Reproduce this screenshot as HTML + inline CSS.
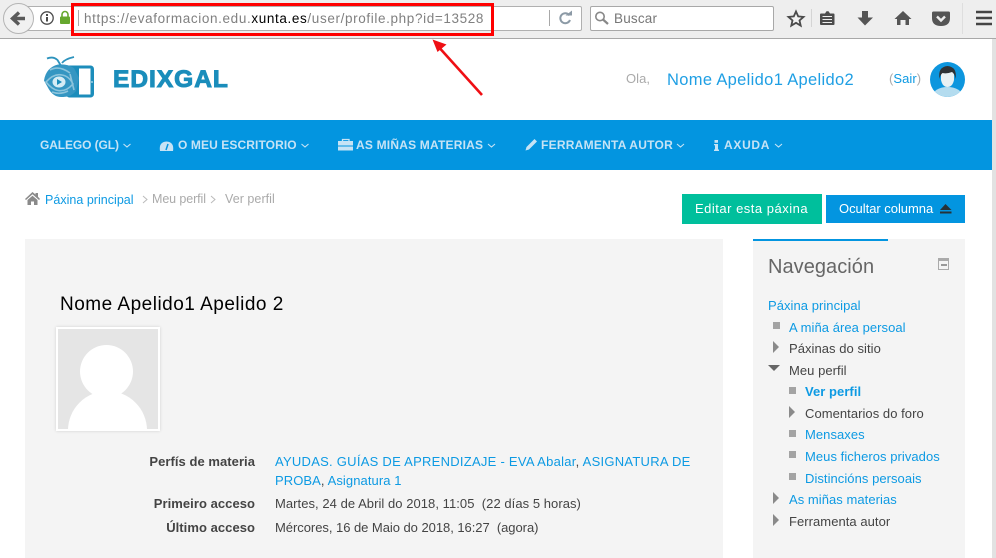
<!DOCTYPE html>
<html><head><meta charset="utf-8"><title>Perfil</title>
<style>
html,body{margin:0;padding:0;background:#fff}
body{width:996px;height:558px;overflow:hidden;position:relative;font-family:"Liberation Sans",sans-serif}
.b{position:absolute}
.t{position:absolute;white-space:nowrap;font-size:13px;line-height:16px;letter-spacing:.05px;color:#444}
.l{color:#0d9ae3}
.w{font-weight:bold}
.n{color:#c6e3f5;font-weight:bold;font-size:12px;top:137px}
.sq{position:absolute;width:7px;height:7px;background:#a3a3a3}
.ar{position:absolute;width:0;height:0;border-left:6px solid #8a8a8a;border-top:6px solid transparent;border-bottom:6px solid transparent}
svg{position:absolute;overflow:visible}
</style></head><body>
<!-- browser chrome -->
<div class="b" style="left:0;top:0;width:996px;height:38px;background:#eeeeee;border-bottom:1px solid #a8a8a8"></div>
<div class="b" style="left:20px;top:6px;width:560px;height:23px;background:#fff;border:1px solid #b0b0b0;border-radius:2px"></div>
<div class="b" style="left:3px;top:3px;width:29px;height:29px;background:#f1f1f1;border:1px solid #b4b4b4;border-radius:50%"></div>
<svg style="left:0;top:0" width="996" height="38">
<path d="M25 18.500H13.500M19 12.500L12.500 18.500L19 24.500" fill="none" stroke="#5a5a5a" stroke-width="3.400"/>
<circle cx="47" cy="18" r="6.200" fill="#fff" stroke="#4c4c4c" stroke-width="1.300"/>
<rect x="46" y="17" width="2" height="4.500" fill="#4c4c4c"/><rect x="46" y="14" width="2" height="2" fill="#4c4c4c"/>
<path d="M62 17v-2.500a3 3 0 0 1 6 0V17" fill="none" stroke="#66a82e" stroke-width="1.600"/>
<rect x="60" y="16.500" width="10" height="7.500" rx="1" fill="#66a82e"/>
<rect x="78" y="10" width="1" height="16" fill="#aaa"/>
<rect x="549" y="10" width="1" height="16" fill="#a8a8a8"/>
<path d="M569.500 15.500a5 5 0 1 0 .5 4.500" fill="none" stroke="#8c9aa6" stroke-width="2"/>
<path d="M565.500 15.500h6.500v-5z" fill="#8c9aa6"/>
<path d="M796 11.500l2.200 4.900 5.300.5-4 3.500 1.200 5.200-4.700-2.800-4.700 2.800 1.200-5.200-4-3.500 5.300-.5z" fill="#f2f2f2" stroke="#4a4a4a" stroke-width="1.800"/>
<rect x="811" y="9" width="1" height="18" fill="#d4d4d4"/>
<path d="M821 13.500h4l1.500-2.200h2l1.500 2.200h3.500q1 0 1 1v9.500q0 1-1 1H821q-1 0-1-1v-9.500q0-1 1-1z" fill="#4c4c4c"/>
<path d="M822.500 16.500h9.500M822.500 19.500h9.500M822.500 22.500h9.500" stroke="#eee" stroke-width="1"/>
<path d="M862 11h6v6.500h5L865 25.500 857.500 17.500h4.500z" fill="#555"/>
<path d="M903 11l8.500 8h-2.500v6h-3.500v-5h-5v5H897v-6h-2.500z" fill="#555"/>
<path d="M933.500 11.500h15q1.500 0 1.500 1.500v5q0 8-9 8t-9-8v-5q0-1.500 1.500-1.500z" fill="#555"/>
<path d="M937 16.500l4 4 4-4" fill="none" stroke="#eee" stroke-width="2.400"/>
<rect x="962" y="3" width="1" height="31" fill="#dedede"/>
<path d="M976 12h16M976 18h16M976 24h16" stroke="#444" stroke-width="2.400"/>
</svg>
<div class="b" style="left:590px;top:6px;width:182px;height:23px;background:#fff;border:1px solid #a8a8a8;border-radius:2px"></div>
<svg style="left:0;top:0" width="996" height="38">
<circle cx="600" cy="16.500" r="4.200" fill="none" stroke="#888" stroke-width="1.600"/>
<path d="M603 19.500l5 4.500" stroke="#888" stroke-width="2.200"/></svg>
<div class="t" style="left:614px;top:11px;font-size:13.500px;letter-spacing:.2px;color:#777">Buscar</div>
<div class="t" style="left:84px;top:11px;font-size:13.500px;letter-spacing:.63px;color:#808080">https://evaformacion.edu.<span style="color:#000">xunta.es</span>/user/profile.php?id=13528</div>
<!-- red annotation -->
<div class="b" style="left:71px;top:3px;width:417px;height:27px;border:3px solid #f00"></div>
<svg style="left:0;top:0" width="996" height="100">
<path d="M482 95L436 44" stroke="#ef0f14" stroke-width="2.600"/>
<path d="M432.500 39.500L446.500 44.500L437.500 52z" fill="#ef0f14"/>
</svg>
<!-- scrollbar -->
<div class="b" style="left:992px;top:39px;width:4px;height:519px;background:#e2e2e2"></div>
<!-- logo -->
<svg style="left:0;top:0" width="240" height="110">
<path d="M47 58.500q6-2.500 10.500 1.500l3 5M62 63q3-4 12-6" fill="none" stroke="#2d93bd" stroke-width="1.800"/>
<rect x="66" y="65.500" width="28" height="32" rx="3.500" fill="#1c8dbb"/>
<rect x="79" y="68.500" width="11.500" height="26" fill="#fff"/>
<path d="M58 64.500q9-1 16 3.500l5 10-3 13q-5 6.500-14 6-8 .5-13-7.500l-5-9q2-13 14-16z" fill="#3596c2"/>
<path d="M46 82q8-9 16-7 7 1 11 9-7 8-15 6.500-6-1-12-8.500zM50 70q9-5 20 3M52 92q8 3 16-1M70 74l4 16" fill="none" stroke="#8cc4dc" stroke-width="1.600"/>
<ellipse cx="59" cy="82" rx="6.500" ry="5.500" fill="#d6ecf5"/>
<path d="M57 79l5 3-5 3z" fill="#1c8dbb"/>
<circle cx="92" cy="82" r="1" fill="#9fd0e5"/>
</svg>
<div class="t" style="left:113px;top:66px;font-size:24.500px;line-height:28px;font-weight:bold;letter-spacing:1px;color:#1a8dbb;-webkit-text-stroke:1px #1a8dbb">EDIXGAL</div>
<!-- user -->
<div class="t" style="left:626px;top:71px;color:#aaa;letter-spacing:.05px">Ola,</div>
<div class="t" style="left:667px;top:70px;font-size:16.500px;line-height:20px;letter-spacing:.33px;color:#1f9fe4">Nome Apelido1 Apelido2</div>
<div class="t" style="left:889px;top:71px;color:#aaa;letter-spacing:.05px">(<span class="l">Sair</span>)</div>
<svg style="left:930px;top:62px" width="35" height="35">
<defs><clipPath id="c"><circle cx="17.500" cy="17.500" r="17.500"/></clipPath></defs>
<circle cx="17.500" cy="17.500" r="17.500" fill="#0d96de"/>
<g clip-path="url(#c)"><ellipse cx="17.500" cy="34" rx="15" ry="9" fill="#b4dcef"/>
<path d="M11 11q6.500-8 13 0v7q-1.500 7-6.500 7t-6.500-7z" fill="#e9f1f3"/>
<path d="M9.500 17q-2-12 8-13 10 1 8 13-.5-5-3.500-7-5 2-9.500 1-2.500 2-3 6z" fill="#2f3336"/></g>
</svg>
<!-- nav -->
<div class="b" style="left:0;top:120px;width:992px;height:50px;background:#0395e0"></div>
<div class="t n" style="left:40px;letter-spacing:-.1px">GALEGO (GL)</div>
<div class="t n" style="left:178px;letter-spacing:.1px">O MEU ESCRITORIO</div>
<div class="t n" style="left:356px;letter-spacing:.2px">AS MIÑAS MATERIAS</div>
<div class="t n" style="left:541px;letter-spacing:.25px">FERRAMENTA AUTOR</div>
<div class="t n" style="left:724px;letter-spacing:.7px">AXUDA</div>
<svg style="left:0;top:120px" width="992" height="50" fill="none" stroke="#c6e3f5" stroke-width="1.100">
<path d="M123.500 24l3.500 3 3.500-3M301.500 24l3.500 3 3.500-3M488 24l3.500 3 3.500-3M677 24l3.500 3 3.500-3M775 24l3.500 3 3.500-3"/>
<path d="M160 31q-1.500-9 6.500-9.500 8 .5 6.500 9.500z" fill="#c6e3f5" stroke="none"/>
<path d="M166 30l2-6" stroke="#0395e0" stroke-width="1.500"/>
<path d="M342.500 21.500v-2h6.500v2" stroke-width="1.300"/>
<rect x="338" y="21" width="15" height="4.500" fill="#c6e3f5" stroke="none"/>
<rect x="338" y="26.500" width="15" height="4" fill="#c6e3f5" stroke="none"/>
<path d="M525.500 30.500l1-3.500 8-8 2.500 2.500-8 8z" fill="#c6e3f5" stroke="none"/>
<rect x="714.500" y="20" width="3.500" height="2.800" fill="#c6e3f5" stroke="none"/>
<path d="M714 24h4v5.500h1V31H714v-1.500h1V25.300h-1z" fill="#c6e3f5" stroke="none"/>
</svg>
<!-- breadcrumb -->
<svg style="left:25px;top:192px" width="15" height="13"><path d="M7.500 0l3 2.500V1H13v3.800L15 7l-1 1-6.500-5.700L1 8 0 7zM2.500 8l5-4.300 5 4.300v5H9V9.500H6V13H2.500z" fill="#8a8a8a"/></svg>
<div class="t l" style="left:45px;top:192px;font-size:12.500px;letter-spacing:.02px">Páxina principal</div>
<svg style="left:0;top:0" width="300" height="210" fill="none" stroke="#bbb" stroke-width="1"><path d="M143 196l4 3.500-4 3.500M211 196l4 3.500-4 3.500"/></svg>
<div class="t" style="left:152px;top:191px;font-size:12.500px;letter-spacing:-.1px;color:#aaa">Meu perfil</div>
<div class="t" style="left:225px;top:191px;font-size:12.500px;letter-spacing:.05px;color:#aaa">Ver perfil</div>
<!-- buttons -->
<div class="b" style="left:682px;top:194px;width:140px;height:30px;background:#00bf9c"></div>
<div class="t" style="left:695px;top:201px;color:#fff;letter-spacing:.5px">Editar esta páxina</div>
<div class="b" style="left:826px;top:195px;width:139px;height:28px;background:#0395e0"></div>
<div class="t" style="left:839px;top:201px;color:#fff;letter-spacing:-.03px">Ocultar columna</div>
<svg style="left:940px;top:204px" width="12" height="10"><path d="M5.500 0L11.500 6H0z" fill="#263238"/><rect y="7.500" width="11.500" height="2" fill="#263238"/></svg>
<!-- main -->
<div class="b" style="left:25px;top:239px;width:698px;height:319px;background:#f4f4f4"></div>
<div class="t" style="left:60px;top:294px;font-size:19px;line-height:22px;letter-spacing:.5px;color:#000">Nome Apelido1 Apelido 2</div>
<div class="b" style="left:56px;top:327px;width:100px;height:100px;background:#e5e5e5;border:2px solid #fff;box-shadow:0 0 3px rgba(0,0,0,.15);overflow:hidden">
<div class="b" style="left:22px;top:16px;width:53px;height:53px;border-radius:50%;background:#fff"></div>
<div class="b" style="left:10px;top:62px;width:79px;height:79px;border-radius:50%;background:#fff"></div>
</div>
<div class="t w" style="right:741px;top:454px">Perfís de materia</div>
<div class="t w" style="right:741px;top:496px">Primeiro acceso</div>
<div class="t w" style="right:741px;top:520px">Último acceso</div>
<div class="t l" style="left:275px;top:454px;letter-spacing:.26px">AYUDAS. GUÍAS DE APRENDIZAJE - EVA Abalar<span style="color:#444">,</span> ASIGNATURA DE</div>
<div class="t l" style="left:275px;top:473px;letter-spacing:.08px">PROBA<span style="color:#444">,</span> Asignatura 1</div>
<div class="t" style="left:275px;top:496px">Martes, 24 de Abril do 2018, 11:05 &nbsp;(22 días 5 horas)</div>
<div class="t" style="left:275px;top:520px;letter-spacing:-.04px">Mércores, 16 de Maio do 2018, 16:27 &nbsp;(agora)</div>
<!-- sidebar -->
<div class="b" style="left:753px;top:239px;width:212px;height:319px;background:#f4f4f4"></div>
<div class="b" style="left:753px;top:239px;width:135px;height:2px;background:#0395e0"></div>
<div class="t" style="left:768px;top:255px;font-size:20px;line-height:24px;letter-spacing:.05px;color:#666">Navegación</div>
<div class="b" style="left:938px;top:258px;width:9px;height:8px;border:1.500px solid #aaa;border-top-width:3px"></div>
<div class="b" style="left:941px;top:264px;width:6px;height:2px;background:#999"></div>
<div class="t l" style="left:768px;top:298px">Páxina principal</div>
<div class="sq" style="left:773px;top:322px"></div><div class="t l" style="left:789px;top:320px">A miña área persoal</div>
<div class="ar" style="left:773px;top:341px"></div><div class="t" style="left:789px;top:341px">Páxinas do sitio</div>
<div class="b" style="left:768px;top:365px;width:0;height:0;border-top:6px solid #666;border-left:6px solid transparent;border-right:6px solid transparent"></div><div class="t" style="left:789px;top:363px">Meu perfil</div>
<div class="sq" style="left:789px;top:387px"></div><div class="t l w" style="left:805px;top:384px">Ver perfil</div>
<div class="ar" style="left:789px;top:406px"></div><div class="t" style="left:805px;top:406px">Comentarios do foro</div>
<div class="sq" style="left:789px;top:430px"></div><div class="t l" style="left:805px;top:427px">Mensaxes</div>
<div class="sq" style="left:789px;top:451px"></div><div class="t l" style="left:805px;top:449px">Meus ficheros privados</div>
<div class="sq" style="left:789px;top:473px"></div><div class="t l" style="left:805px;top:471px">Distincións persoais</div>
<div class="ar" style="left:773px;top:492px"></div><div class="t l" style="left:789px;top:492px">As miñas materias</div>
<div class="ar" style="left:773px;top:514px"></div><div class="t" style="left:789px;top:514px">Ferramenta autor</div>
</body></html>
